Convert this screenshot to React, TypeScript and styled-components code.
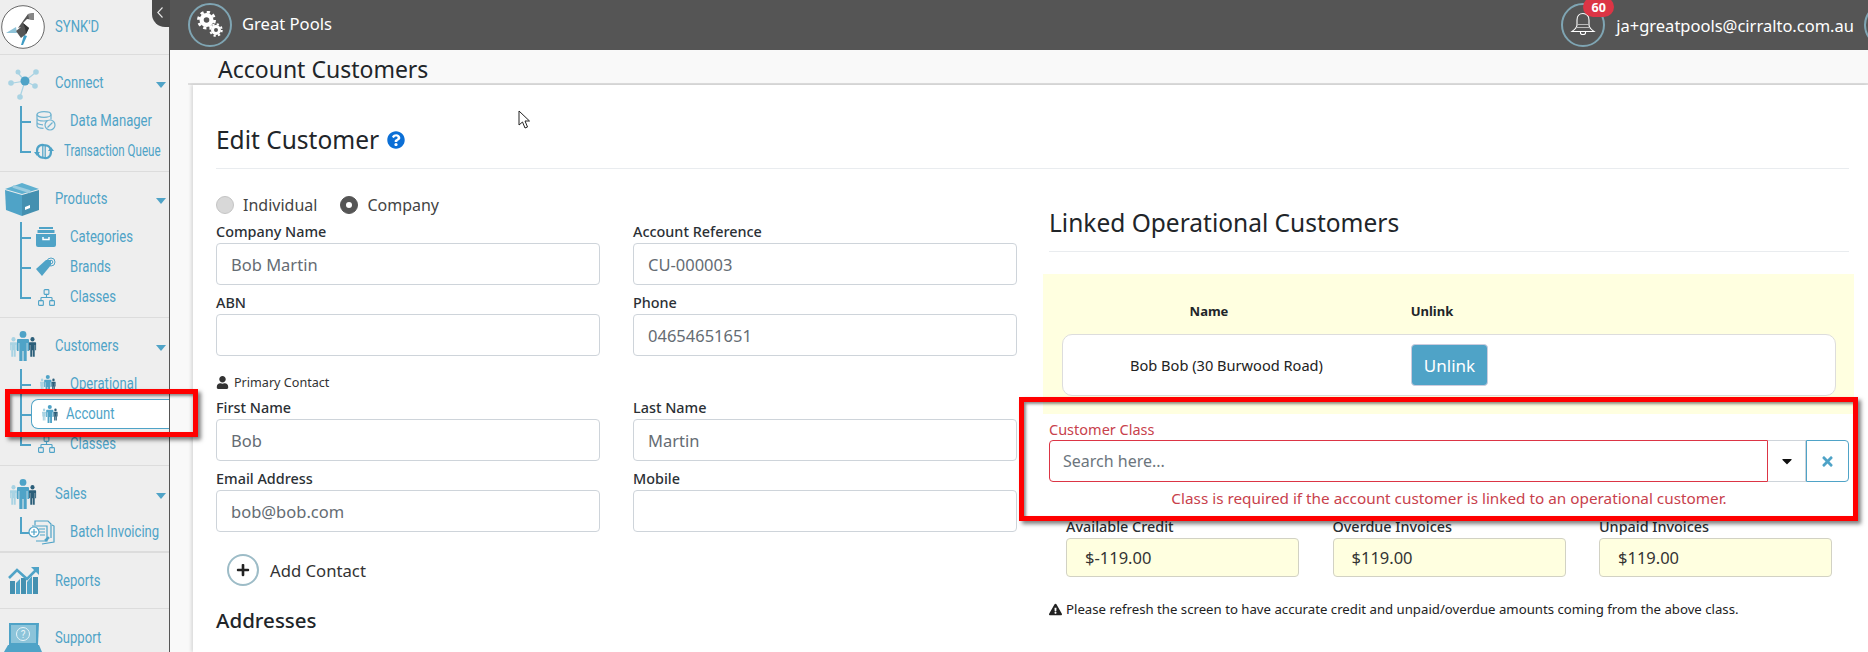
import React from 'react';
import styled, { createGlobalStyle } from 'styled-components';
import { FaQuestionCircle, FaUser, FaPlus, FaTimes, FaExclamationTriangle, FaCaretDown } from 'react-icons/fa';
import { Network } from 'lucide-react';

const BLUE = '#4fa3c7';
const Global = createGlobalStyle`
  html, body { margin: 0; padding: 0; background: #f9f9f9; }
  body { font-family: "Noto Sans", "Open Sans", sans-serif; color: #212529; }
  * { box-sizing: border-box; }
`;
const Page = styled.div`
  position: relative; display: grid; grid-template-columns: 170px 1fr;
  width: 1868px; height: 652px; overflow: hidden;
`;
const Sidebar = styled.nav`
  background: #eeeeee; border-right: 1px solid #555; height: 652px; overflow: hidden;
  font-family: Roboto, sans-serif; color: ${BLUE};
`;
const Section = styled.section<{ $top: number; $bottom: number; $thick?: boolean; $last?: boolean }>`
  padding: ${p => p.$top}px 0 ${p => p.$bottom}px;
  border-bottom: ${p => (p.$last ? 'none' : `${p.$thick ? 2 : 1}px solid #dcdcdc`)};
`;
const Brand = styled.div`
  display: flex; align-items: center; height: 55px; border-bottom: 1px solid #dcdcdc; padding-left: 1px;
`;
const TopRow = styled.div<{ $h?: number }>`
  display: flex; align-items: center; height: ${p => p.$h ?? 46}px; position: relative;
`;
const IconSlot = styled.span`
  width: 55px; flex: none; display: flex; justify-content: center; padding-right: 9px;
`;
const Label = styled.span<{ $w?: number; $gap?: number }>`
  display: inline-block; font-size: 17px; white-space: nowrap; padding-bottom: 2px; margin-left: ${p => p.$gap ?? 0}px;
  transform: scaleX(${p => p.$w ?? 0.77}); transform-origin: left center;
`;
const Caret = styled.span`
  position: absolute; left: 156px; top: 50%; margin-top: -1px;
  border-left: 5px solid transparent; border-right: 5px solid transparent; border-top: 6px solid ${BLUE};
`;
const SubRow = styled.div<{ $h?: number; $end?: boolean }>`
  position: relative; display: flex; align-items: center; height: ${p => p.$h ?? 30}px;
  &::before { content: ''; position: absolute; left: 20px; top: 0; width: 2px; height: ${p => (p.$end ? '50%' : '100%')}; background: ${BLUE}; }
  &::after { content: ''; position: absolute; left: 20px; top: 50%; width: 11px; height: 2px; background: ${BLUE}; }
`;
const SubIcon = styled.span<{ $x?: number }>`
  width: ${p => p.$x ?? 70}px; flex: none; display: flex; justify-content: flex-end; padding-right: ${p => (p.$x ? 10 : 14)}px; position: relative; z-index: 1;
`;
const ActiveBox = styled.div`
  position: absolute; left: 31px; right: 0; top: 0; bottom: 0; z-index: 1;
  display: flex; align-items: center; background: #fff; border: 1px solid ${BLUE}; border-right: none; border-radius: 7px 0 0 7px;
`;
const ActiveIcon = styled.span`
  width: 34px; flex: none; display: flex; justify-content: center; padding-left: 2px;
`;
const CollapseTab = styled.div`
  position: absolute; left: 152px; top: 0; width: 18px; height: 27px; background: #4a4a4a;
  border-radius: 0 0 0 13px; display: flex; align-items: flex-start; padding: 7px 0 0 5px; z-index: 3;
`;
const Main = styled.main` min-width: 0; background: #f9f9f9; `;
const Header = styled.header`
  height: 50px; background: #555555; color: #fff; display: flex; align-items: center; padding-left: 18px;
`;
const RoundIcon = styled.span`
  position: relative; width: 44px; height: 44px; flex: none; border-radius: 50%; border: 2px solid #7fa5b3;
  display: flex; align-items: center; justify-content: center; color: #fff;
`;
const Org = styled.span` margin-left: 10px; font-size: 16.6px; margin-top: -3px; flex: 1; `;
const Badge = styled.span`
  position: absolute; left: 20px; top: -8px; width: 31px; height: 20px; border-radius: 10px; background: #dc3545; color: #fff;
  font-size: 12.5px; font-weight: 700; text-align: center; line-height: 21px;
`;
const Email = styled.span` margin-left: 11px; font-size: 16.5px; white-space: nowrap; `;
const PartialCircle = styled.span`
  width: 44px; height: 44px; flex: none; margin-left: 10px; margin-right: -40px; border-radius: 50%; border: 2px solid #7fa5b3;
`;
const SubHeader = styled.div`
  height: 35px; margin-left: 18px; padding-left: 30px; border-bottom: 2px solid #dedede;
  font-size: 23px; line-height: 39px; white-space: nowrap;
`;
const Card = styled.div`
  margin-left: 23px; height: 567px; background: #fff; box-shadow: -2px 0 3px rgba(0,0,0,.12); padding: 35px 19px 0 23px;
`;
const Title = styled.h1`
  margin: 0; height: 49px; padding-bottom: 9px; border-bottom: 1px solid #e9ecef; font-size: 24.5px; font-weight: 400;
  line-height: 40px; display: flex; align-items: center; gap: 8px;
  svg { color: #0b6fd6; }
`;
const Columns = styled.div` display: grid; grid-template-columns: 800px 800px; column-gap: 33px; `;
const Radios = styled.div` display: flex; align-items: center; height: 24px; margin: 24px 0 4px; font-size: 16px; color: #444; `;
const RadioDot = styled.span<{ $on?: boolean }>`
  width: 18px; height: 18px; border-radius: 50%; flex: none; margin-right: ${p => (p.$on ? 9 : 9)}px;
  background: ${p => (p.$on ? '#555' : '#d8d8d8')}; border: 1px solid ${p => (p.$on ? '#555' : '#c4c4c4')};
  display: flex; align-items: center; justify-content: center;
  &::after { content: ''; width: 6px; height: 6px; border-radius: 50%; background: ${p => (p.$on ? '#fff' : 'transparent')}; }
`;
const RadioText = styled.span` margin-right: 23px; `;
const FormGrid = styled.div` display: grid; grid-template-columns: 384px 384px; column-gap: 33px; `;
const Field = styled.div` margin-bottom: 7px; `;
const FieldLabel = styled.label`
  display: block; height: 22px; font-size: 14.4px; font-weight: 500; line-height: 22px; color: #2b3035; white-space: nowrap;
`;
const TextInput = styled.div<{ $stat?: boolean }>`
  height: ${p => (p.$stat ? 39 : 42)}px; border: 1px solid ${p => (p.$stat ? '#d2d2c4' : '#ced4da')}; border-radius: 4px;
  background: ${p => (p.$stat ? '#ffffe0' : '#fff')}; display: flex; align-items: center; padding: 0 ${p => (p.$stat ? 18 : 14)}px;
  font-size: 16.5px; color: ${p => (p.$stat ? '#333' : '#656c73')};
`;
const ContactHead = styled.div`
  display: flex; align-items: center; gap: 5px; height: 22px; margin: 8px 0 4px; font-size: 12.6px; color: #333;
`;
const AddRow = styled.div`
  display: flex; align-items: center; height: 32px; margin: 15px 0 19px 11px; font-size: 16.7px; color: #333;
`;
const AddCircle = styled.span`
  width: 32px; height: 32px; border: 2px solid #9dbcc7; border-radius: 50%; display: flex; align-items: center; justify-content: center;
  margin-right: 11px; color: #222; font-size: 14px;
`;
const Addresses = styled.h2` margin: 0; height: 30px; line-height: 30px; font-size: 20.5px; font-weight: 500; `;
const RightTitle = styled.h2`
  margin: 34px 0 22px; height: 49px; padding-bottom: 9px; border-bottom: 1px solid #e9ecef; font-size: 24.5px; font-weight: 400; line-height: 40px; white-space: nowrap;
`;
const Panel = styled.div` margin: 0 -5px 0 -6px; background: #ffffe0; padding: 25px 18px 18px 19px; `;
const HeadRow = styled.div`
  display: grid; grid-template-columns: 294px 152px; height: 24px; align-items: center; text-align: center; font-size: 13px; font-weight: 700; margin-bottom: 11px;
`;
const LinkRow = styled.div`
  display: grid; grid-template-columns: 327px auto; column-gap: 21px; justify-content: start; align-items: center;
  height: 62px; background: #fff; border: 1px solid #ddd; border-radius: 10px; font-size: 14.6px;
`;
const LinkName = styled.span` text-align: center; color: #222; white-space: nowrap; `;
const UnlinkButton = styled.button`
  width: 77px; height: 42px; background: ${BLUE}; color: #fff; border: 1px solid #ccd; border-radius: 4px; font: inherit; font-size: 17px;
`;
const ClassLabel = styled.div` margin-top: 4px; height: 22px; line-height: 22px; font-size: 14.5px; color: #c8414c; `;
const SearchGroup = styled.div` display: flex; height: 42px; `;
const SearchInput = styled.div`
  flex: 1; border: 1px solid #dc3545; border-radius: 4px 0 0 4px; display: flex; align-items: center; padding-left: 13px; font-size: 16px; color: #6c757d;
`;
const ArrowBox = styled.div`
  width: 38px; display: flex; align-items: center; justify-content: center; border: 1px solid #ced4da; border-left: none; font-size: 16px; color: #111;
`;
const ClearBox = styled.div`
  width: 43px; display: flex; align-items: center; justify-content: center; border: 1px solid ${BLUE}; border-radius: 0 4px 4px 0; color: ${BLUE}; font-size: 15px;
`;
const ErrorText = styled.div` margin-top: 5px; height: 22px; line-height: 22px; text-align: center; font-size: 15.3px; color: #c8414c; white-space: nowrap; `;
const Stats = styled.div` display: grid; grid-template-columns: repeat(3, 233px); column-gap: 33.5px; padding-left: 17px; margin-top: 7px; `;
const Note = styled.div` margin-top: 22px; display: flex; align-items: center; gap: 4px; height: 20px; font-size: 13.2px; color: #222; white-space: nowrap; `;
const Annotation = styled.div<{ $l: number; $t: number; $w: number; $h: number }>`
  position: absolute; left: ${p => p.$l}px; top: ${p => p.$t}px; width: ${p => p.$w}px; height: ${p => p.$h}px;
  border: 5px solid #f00; box-shadow: 3px 3px 4px rgba(0,0,0,.5), inset 2px 2px 3px rgba(0,0,0,.45); z-index: 5; pointer-events: none;
`;
const Cursor = styled.svg` position: absolute; left: 518px; top: 110px; z-index: 4; `;

const LIGHT = '#a9d3e3', MID = '#4fa3c7', DARK = '#2c5f7a';
const Figure = ({ x, y, sx, sy, c }: { x: number; y: number; sx: number; sy: number; c: string }) => (
  <g fill={c} transform={`translate(${x} ${y}) scale(${sx} ${sy})`}>
    <circle cx="0" cy="3.4" r="3.400" />
    <path d="M-5 8h10a1 1 0 0 1 1 1v11h-1.600v-8h-.7v18h-3.200V20h-1v10h-3.200V12h-.7v8H-6V9a1 1 0 0 1 1-1z" />
  </g>
);
const People = ({ size = 30 }: { size?: number }) => (
  <svg width={size * 0.9} height={size} viewBox="0 0 27 30">
    <Figure x={3.5} y={6} sx={0.6} sy={0.66} c={LIGHT} />
    <Figure x={22.5} y={6} sx={0.6} sy={0.66} c={DARK} />
    <Figure x={13} y={0} sx={1} sy={1} c={MID} />
  </svg>
);
const Logo = () => (
  <svg width="44" height="44" viewBox="0 0 44 44">
    <circle cx="22" cy="22" r="21.300" fill="#fff" stroke="#666" strokeWidth="1" />
    <path d="M5 28L15 22l1 6z" fill="#8fc3d8" />
    <path d="M20 40l3-10 3 1-4 9z" fill="#3f9cc4" />
    <path d="M17 23L27 9l6-1v7l-7-1-4 4 6 5-3 6-5 4-5-7 5-4z" fill="#555" />
    <path d="M27 9l6-1v7l-5-1z" fill="#888" />
    <path d="M22 18l6 5-3 6-1-6z" fill="#333" />
  </svg>
);
const NetworkIcon = () => (
  <svg width="34" height="34" viewBox="0 0 34 34">
    <g stroke={LIGHT} strokeWidth="1.200">
      <path d="M19 15 L7 17M19 15L12 7M19 15L29 7M19 15L29 20M19 15L14 31" />
    </g>
    <g fill={LIGHT}>
      <circle cx="5" cy="17" r="2.800" /><circle cx="12" cy="6" r="2.500" /><circle cx="30" cy="6" r="2.800" /><circle cx="29" cy="20" r="2.800" /><circle cx="14" cy="31" r="2.800" />
    </g>
    <circle cx="19" cy="15" r="4.500" fill={MID} />
  </svg>
);
const DataIcon = () => (
  <svg width="20" height="20" viewBox="0 0 20 20" fill="none" stroke="#6fb3d0" strokeWidth="1.200">
    <ellipse cx="8" cy="3.500" rx="7" ry="2.800" />
    <path d="M1 3.500v11c0 1.600 3 2.800 6.500 2.800M15 3.500v5M1 7.200c0 1.600 3 2.800 7 2.800 1.500 0 3-.2 4-.5M1 11c0 1.600 3 2.700 6 2.800" />
    <circle cx="14" cy="14" r="5" fill="#eee" /><path d="M11.500 16.500l5-5" />
  </svg>
);
const QueueIcon = () => (
  <svg width="20" height="17" viewBox="0 0 20 17" fill="none" stroke={MID} strokeWidth="2.200">
    <path d="M11 2.500C8 1 3 2 3 8c0 4 3 7 6 6.500" />
    <path d="M9 14.500c3 1.500 8 .5 8-6 0-4-3-6.500-6-6" />
    <path d="M8.800 2.500v12M11.200 2.500v12" strokeWidth="1.200" />
    <path d="M0 9h6l-3 4z" fill={MID} stroke="none" />
    <path d="M14 8h6l-3-4z" fill={MID} stroke="none" />
  </svg>
);
const BoxIcon = () => (
  <svg width="36" height="33" viewBox="0 0 36 33">
    <path d="M0 7L17 12V33L1 27Z" fill={MID} />
    <path d="M34 7L17 12V33L34 27Z" fill="#4490b0" />
    <path d="M0 6L17 0L34 6L17 11Z" fill="#5fb0d0" />
    <path d="M8 3.400L25 8.800" stroke="#9ccde0" strokeWidth="3" />
    <path d="M20 27l5-2v-3l-5 2z" fill="#fff" />
  </svg>
);
const TrayIcon = () => (
  <svg width="20" height="20" viewBox="0 0 20 20">
    <path d="M3 0h14v2H3zM1.500 3h17v3h-17z" fill={MID} />
    <path d="M0 7h20v11a2 2 0 0 1-2 2H2a2 2 0 0 1-2-2z" fill={MID} />
    <path d="M7 10v2.500h6V10" stroke="#fff" strokeWidth="1.500" fill="none" />
  </svg>
);
const TagIcon = () => (
  <svg width="20" height="20" viewBox="0 0 20 20">
    <path d="M0 12L10 3h5v5L6 19z" fill={MID} />
    <circle cx="15" cy="5" r="4" fill="none" stroke={MID} strokeWidth="1" />
    <circle cx="15" cy="5" r="1.800" fill="none" stroke={MID} strokeWidth="1" />
  </svg>
);
const InvoiceIcon = () => (
  <svg width="28" height="26" viewBox="0 0 28 26" fill="none" stroke={MID} strokeWidth="1.200">
    <path d="M7 6V2h13l3 3v14" />
    <path d="M4 7l15 0v15H8" />
    <path d="M24 6l2 1v16l-12 2" />
    <path d="M11 10h6M11 13h6M12 16h5" />
    <circle cx="6" cy="13" r="5" fill="#fff" />
    <path d="M6 10v6M3 13h6" />
    <path d="M17 21l3-3 1 1-3 3z" fill={MID} />
  </svg>
);
const ChartIcon = () => (
  <svg width="31" height="27" viewBox="0 0 31 27">
    <path d="M2 27V14h5v13zM13 27V11h5v16zM25 27V10h5v17z" fill="#4490b0" />
    <path d="M8 27V16l4-4v15zM19 27V15l5-6v18z" fill={MID} />
    <path d="M1 11L9 3l10 9L29 2" fill="none" stroke={MID} strokeWidth="2.600" />
    <path d="M23 0h8v8z" fill={MID} />
  </svg>
);
const LaptopIcon = () => (
  <svg width="38" height="30" viewBox="0 0 38 30">
    <path d="M5 0h30l-1 22H5z" fill={MID} />
    <rect x="7" y="2" width="25" height="18" fill="#8cc4da" />
    <circle cx="19" cy="11" r="6.500" fill="none" stroke="#e8f4f8" strokeWidth="1" />
    <text x="19" y="15" textAnchor="middle" fontSize="10" fill="#e8f4f8" fontFamily="Roboto">?</text>
    <path d="M4 22h31l3 7H0z" fill={MID} />
  </svg>
);
const BellIcon = () => (
  <svg width="26" height="26" viewBox="0 0 26 26" fill="none" stroke="#fff" strokeWidth="1.100">
    <path d="M13 1.500c-4 0-6 3-6 6.500v5c0 3-3 5-5 6.500h22c-2-1.500-5-3.500-5-6.500V8c0-3.500-2-6.500-6-6.500z" />
    <path d="M6.500 12.500h13M5.500 15.500h15" stroke="#bbb" />
    <path d="M10.500 19.500v1.500c0 2 5 2 5 0v-1.500" />
  </svg>
);
const Gear = ({ cx, cy, r }: { cx: number; cy: number; r: number }) => {
  const outer = r * 1.15;
  const tooth = (2 * Math.PI * outer) / 16;
  return (
    <g fill="none" stroke="#fff">
      <circle cx={cx} cy={cy} r={r * 0.7} strokeWidth={r * 0.6} />
      <circle cx={cx} cy={cy} r={outer} strokeWidth={r * 0.4} strokeDasharray={`${tooth} ${tooth}`} />
    </g>
  );
};
const GearsIcon = () => (
  <svg width="26" height="28" viewBox="0 0 26 28">
    <Gear cx={9.500} cy={9} r={7} />
    <Gear cx={19} cy={19} r={5} />
  </svg>
);
const SiteIcon = () => <Network size={19} color={MID} strokeWidth={1.400} />;

const Sub = ({ icon, label, w, end, x }: { icon: React.ReactNode; label: string; w?: number; end?: boolean; x?: number }) => (
  <SubRow $end={end}>
    <SubIcon $x={x}>{icon}</SubIcon>
    <Label $w={w}>{label}</Label>
  </SubRow>
);
const TextField = ({ label, value }: { label: string; value?: string }) => (
  <Field>
    <FieldLabel>{label}</FieldLabel>
    <TextInput>{value}</TextInput>
  </Field>
);

export default function App() {
  return (
    <Page>
      <Global />
      <Sidebar>
        <Brand><Logo /><Label $gap={10}>SYNK'D</Label></Brand>
        <Section $top={5} $bottom={5}>
          <TopRow><IconSlot><NetworkIcon /></IconSlot><Label>Connect</Label><Caret /></TopRow>
          <Sub icon={<DataIcon />} label="Data Manager" />
          <Sub icon={<QueueIcon />} label="Transaction Queue" x={64} w={0.68} end />
        </Section>
        <Section $top={4} $bottom={5}>
          <TopRow><IconSlot><BoxIcon /></IconSlot><Label>Products</Label><Caret /></TopRow>
          <Sub icon={<TrayIcon />} label="Categories" />
          <Sub icon={<TagIcon />} label="Brands" />
          <Sub icon={<SiteIcon />} label="Classes" end />
        </Section>
        <Section $top={5} $bottom={6}>
          <TopRow><IconSlot><People /></IconSlot><Label>Customers</Label><Caret /></TopRow>
          <Sub icon={<People size={18} />} label="Operational" />
          <SubRow>
            <ActiveBox><ActiveIcon><People size={18} /></ActiveIcon><Label>Account</Label></ActiveBox>
          </SubRow>
          <Sub icon={<SiteIcon />} label="Classes" end />
        </Section>
        <Section $top={5} $bottom={4} $thick>
          <TopRow><IconSlot><People /></IconSlot><Label>Sales</Label><Caret /></TopRow>
          <Sub icon={<InvoiceIcon />} label="Batch Invoicing" end />
        </Section>
        <Section $top={0} $bottom={0}>
          <TopRow $h={55}><IconSlot><ChartIcon /></IconSlot><Label>Reports</Label></TopRow>
        </Section>
        <Section $top={0} $bottom={0} $last>
          <TopRow $h={57}><IconSlot><LaptopIcon /></IconSlot><Label>Support</Label></TopRow>
        </Section>
      </Sidebar>
      <CollapseTab>
        <svg width="6" height="11" viewBox="0 0 6 11" fill="none" stroke="#e8e8e8" strokeWidth="1.100"><path d="M5.500 .5L.8 5.500l4.700 5" /></svg>
      </CollapseTab>
      <Main>
        <Header>
          <RoundIcon><GearsIcon /></RoundIcon>
          <Org>Great Pools</Org>
          <RoundIcon><BellIcon /><Badge>60</Badge></RoundIcon>
          <Email>ja+greatpools@cirralto.com.au</Email>
          <PartialCircle />
        </Header>
        <SubHeader>Account Customers</SubHeader>
        <Card>
          <Title>Edit Customer <FaQuestionCircle size={18} /></Title>
          <Columns>
            <div>
              <Radios>
                <RadioDot /><RadioText>Individual</RadioText>
                <RadioDot $on /><span>Company</span>
              </Radios>
              <FormGrid>
                <TextField label="Company Name" value="Bob Martin" />
                <TextField label="Account Reference" value="CU-000003" />
                <TextField label="ABN" />
                <TextField label="Phone" value="04654651651" />
              </FormGrid>
              <ContactHead><FaUser size={13} />Primary Contact</ContactHead>
              <FormGrid>
                <TextField label="First Name" value="Bob" />
                <TextField label="Last Name" value="Martin" />
                <TextField label="Email Address" value="bob@bob.com" />
                <TextField label="Mobile" />
              </FormGrid>
              <AddRow><AddCircle><FaPlus /></AddCircle>Add Contact</AddRow>
              <Addresses>Addresses</Addresses>
            </div>
            <div>
              <RightTitle>Linked Operational Customers</RightTitle>
              <Panel>
                <HeadRow><span>Name</span><span>Unlink</span></HeadRow>
                <LinkRow>
                  <LinkName>Bob Bob (30 Burwood Road)</LinkName>
                  <UnlinkButton>Unlink</UnlinkButton>
                </LinkRow>
              </Panel>
              <ClassLabel>Customer Class</ClassLabel>
              <SearchGroup>
                <SearchInput>Search here...</SearchInput>
                <ArrowBox><FaCaretDown /></ArrowBox>
                <ClearBox><FaTimes /></ClearBox>
              </SearchGroup>
              <ErrorText>Class is required if the account customer is linked to an operational customer.</ErrorText>
              <Stats>
                <div><FieldLabel>Available Credit</FieldLabel><TextInput $stat>$-119.00</TextInput></div>
                <div><FieldLabel>Overdue Invoices</FieldLabel><TextInput $stat>$119.00</TextInput></div>
                <div><FieldLabel>Unpaid Invoices</FieldLabel><TextInput $stat>$119.00</TextInput></div>
              </Stats>
              <Note><FaExclamationTriangle size={13} />Please refresh the screen to have accurate credit and unpaid/overdue amounts coming from the above class.</Note>
            </div>
          </Columns>
        </Card>
      </Main>
      <Annotation $l={5} $t={389} $w={193} $h={48} />
      <Annotation $l={1019} $t={397} $w={839} $h={124} />
      <Cursor width="13" height="19" viewBox="0 0 13 19">
        <path d="M1 1v14l3.500-3 2.500 6 2.500-1-2.500-6h4.500z" fill="#fff" stroke="#222" strokeWidth="1" />
      </Cursor>
    </Page>
  );
}
